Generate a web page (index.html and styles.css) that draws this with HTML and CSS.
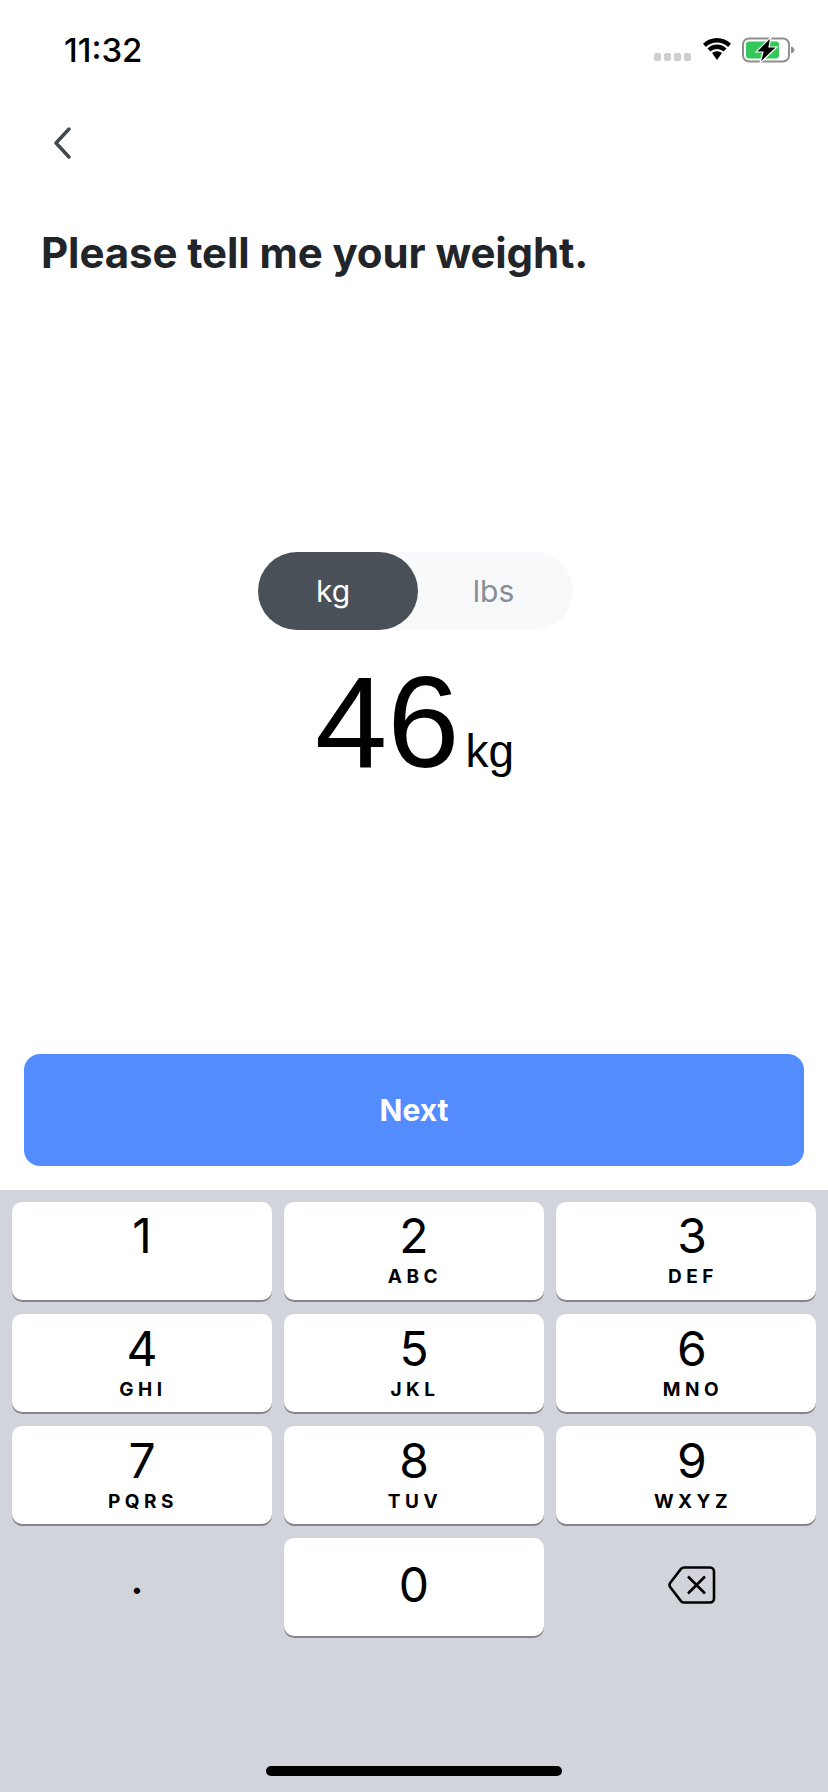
FILE: index.html
```html
<!DOCTYPE html>
<html lang="en">

<head>
  <meta charset="UTF-8">
  <meta name="viewport" content="width=device-width, initial-scale=1.0">
  <title>Weight</title>
  <link rel="stylesheet" href="styles.css">
</head>

<body>
  <div class="main">
    <div class="status">
      <span class="time">11:32</span>
      <div class="status-icons">
        <div class="signal"><i></i><i></i><i></i><i></i></div>
        <svg class="wifi" width="32" height="24" viewBox="0 0 32 24">
          <path d="M16 5.500c4.300 0 8.200 1.700 11.100 4.400l2.900-3.200C26.300 3.200 21.400 1 16 1S5.700 3.200 2 6.700l2.900 3.200C7.800 7.200 11.700 5.500 16 5.500z" />
          <path d="M16 12c2.500 0 4.800 1 6.600 2.600l2.900-3.200C23 9 19.700 7.600 16 7.600S9 9 6.500 11.400l2.900 3.200C11.200 13 13.500 12 16 12z" />
          <path d="M16 14.200c-1.900 0-3.600.7-4.900 1.900L16 23l4.900-6.900c-1.300-1.200-3-1.900-4.900-1.900z" />
        </svg>
        <svg class="battery" width="54" height="26" viewBox="0 0 54 26">
          <rect x="1" y="1.500" width="46" height="23" rx="6" fill="none" stroke="#8f8f8f" stroke-width="2" />
          <rect x="4" y="4.500" width="33" height="17" rx="3" fill="#34c759" />
          <path d="M49 9.500c2 .5 3.500 2 3.500 3.500s-1.500 3-3.500 3.500z" fill="#8f8f8f" />
          <path d="M29 0 14 15h7l-3 11 17-16h-8z" fill="#000" stroke="#fff" stroke-width="1.200" />
        </svg>
      </div>
    </div>

    <div class="back">
      <svg width="20" height="34" viewBox="0 0 20 34">
        <path d="M17 3 4 17l13 14" fill="none" stroke="#43484c" stroke-width="3.500" stroke-linecap="round" stroke-linejoin="round" />
      </svg>
    </div>

    <h1 class="title">Please tell me your weight.</h1>

    <div class="toggle">
      <div class="seg seg-kg">kg</div>
      <div class="seg seg-lbs">lbs</div>
    </div>

    <div class="value">
      <span class="num">46</span>
      <span class="unit">kg</span>
    </div>

    <div class="next">Next</div>

    <div class="keyboard">
      <div class="keys">
        <div class="key"><span class="digit">1</span></div>
        <div class="key"><span class="digit">2</span><span class="letters">ABC</span></div>
        <div class="key"><span class="digit">3</span><span class="letters">DEF</span></div>
        <div class="key"><span class="digit">4</span><span class="letters">GHI</span></div>
        <div class="key"><span class="digit">5</span><span class="letters">JKL</span></div>
        <div class="key"><span class="digit">6</span><span class="letters">MNO</span></div>
        <div class="key"><span class="digit">7</span><span class="letters">PQRS</span></div>
        <div class="key"><span class="digit">8</span><span class="letters">TUV</span></div>
        <div class="key"><span class="digit">9</span><span class="letters">WXYZ</span></div>
        <div class="key key-flat key-dot"><span class="digit dot">.</span></div>
        <div class="key key-zero"><span class="digit">0</span></div>
        <div class="key key-flat key-del">
          <svg width="48" height="40" viewBox="0 0 48 40">
            <path d="M16 2.500h26a4 4 0 0 1 4 4v27a4 4 0 0 1-4 4H16a4 4 0 0 1-2.800-1.200L2.500 22.500a4 4 0 0 1 0-5L13.200 3.700A4 4 0 0 1 16 2.500z" fill="none" stroke="#000" stroke-width="2.600" />
            <path d="M20 11.500l17 17M37 11.500l-17 17" fill="none" stroke="#000" stroke-width="2.600" />
          </svg>
        </div>
      </div>
      <div class="home-bar"></div>
    </div>
  </div>
</body>

</html>
```

FILE: styles.css
```css
* {
  margin: 0;
  padding: 0;
  box-sizing: border-box;
}

body {
  font-family: "Inter", "Liberation Sans", sans-serif;
  background-color: #fff;
}

.main {
  width: 828px;
  height: 1792px;
  display: flex;
  flex-direction: column;
  overflow: hidden;
}

/* status bar */
.status {
  height: 100px;
  padding: 31px 32px 0 64px;
  display: flex;
  justify-content: space-between;
  align-items: flex-start;
}

.time {
  font-size: 33px;
  line-height: 38px;
  font-weight: 500;
  color: #000;
}

.status-icons {
  display: flex;
  align-items: flex-start;
  padding-top: 6px;
}

.signal {
  display: flex;
  gap: 3px;
  margin-top: 16px;
  margin-right: 10px;

  & i {
    width: 7px;
    height: 8px;
    border-radius: 2px;
    background-color: #cfcfcf;
  }
}

.wifi {
  margin-right: 9px;
}

/* header */
.back {
  height: 60px;
  margin-top: 26px;
  padding-left: 52px;
}

.title {
  margin-top: 43px;
  padding-left: 41px;
  font-size: 42px;
  line-height: 48px;
  font-weight: 700;
  letter-spacing: -0.1px;
  color: #212529;
}

/* unit switch */
.toggle {
  width: 315px;
  height: 78px;
  margin: 275px 0 0 258px;
  display: flex;
  border-radius: 39px;
  background-color: #f8f9fa;
}

.seg {
  height: 100%;
  display: flex;
  align-items: center;
  justify-content: center;
  font-size: 30px;
}

.seg-kg {
  width: 160px;
  padding-right: 10px;
  border-radius: 39px;
  background-color: #495057;
  color: #fff;
}

.seg-lbs {
  flex: 1;
  padding-right: 4px;
  color: #868e96;
}

.value {
  margin-top: 17px;
  padding-left: 315px;
  display: flex;
  align-items: baseline;
  height: 150px;
  font-family: "Liberation Sans", sans-serif;
  color: #000;
}

.num {
  font-size: 130px;
  line-height: 150px;
}

.unit {
  margin-left: 6px;
  font-size: 46px;
}

.next {
  height: 112px;
  margin: 257px 24px 0;
  border-radius: 16px;
  background-color: #528cff;
  color: #fff;
  font-size: 30px;
  font-weight: 700;
  display: flex;
  align-items: center;
  justify-content: center;
}

/* keyboard */
.keyboard {
  flex: 1;
  margin-top: 24px;
  padding: 12px 12px 0;
  background-color: #d1d4da;
  display: flex;
  flex-direction: column;
}

.keys {
  display: grid;
  grid-template-columns: repeat(3, 260px);
  grid-auto-rows: 98px;
  column-gap: 12px;
  row-gap: 14px;
}

.key {
  display: flex;
  flex-direction: column;
  align-items: center;
  padding-top: 10px;
  border-radius: 10px;
  background-color: #fff;
  box-shadow: 0 2px 0 #85878a;

  &:nth-child(3n) {
    padding-left: 12px;
  }

  &:nth-child(n+4):nth-child(-n+9) {
    padding-top: 11px;
  }
}

.digit {
  font-size: 48px;
  line-height: 48px;
  color: #000;
}

.letters {
  margin-top: 7px;
  margin-left: 2px;
  font-size: 19px;
  line-height: 20px;
  font-weight: 700;
  letter-spacing: 4.500px;
  color: #000;
}

.key-zero {
  padding-top: 0;
  padding-bottom: 5px;
  justify-content: center;
}

.key-flat {
  padding-top: 0;
  justify-content: center;
  background-color: transparent;
  box-shadow: none;
}

.key-dot {
  padding-right: 10px;
}

.key-del {
  padding-bottom: 5px;
}

.dot {
  margin-top: -20px;
}

.home-bar {
  width: 296px;
  height: 10px;
  margin: auto auto 16px;
  border-radius: 5px;
  background-color: #000;
}
```
